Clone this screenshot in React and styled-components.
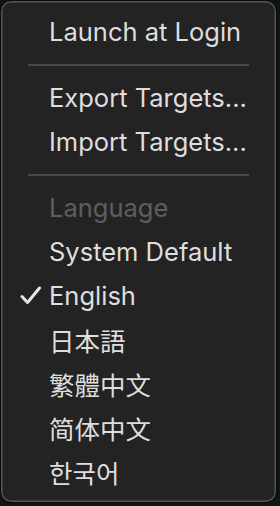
import React from "react";
import styled, { createGlobalStyle } from "styled-components";

const GlobalStyle = createGlobalStyle`
  html, body {
    margin: 0;
    padding: 0;
    background: #0e1513;
  }
  body {
    font-family: Inter, "Noto Sans CJK JP", "Noto Sans CJK KR", sans-serif;
  }
`;

const Menu = styled.div`
  box-sizing: border-box;
  width: 277px;
  height: 503px;
  padding: 9px 0;
  background: #232323;
  border: 1px solid #0a0a0a;
  border-radius: 11px;
  box-shadow: inset 0 0 0 1.5px #575757;
  display: flex;
  flex-direction: column;
`;

const Item = styled.div`
  position: relative;
  height: 44px;
  display: flex;
  align-items: center;
  padding-left: 48px;
  font-size: 25.5px;
  letter-spacing: 0;
  color: ${(p) => (p.$disabled ? "#5e5e5e" : "#dedede")};
  font-family: ${(p) =>
    p.$cjk
      ? `"Noto Sans CJK ${p.$cjk}", Inter, sans-serif`
      : `Inter, "Noto Sans CJK JP", sans-serif`};
`;

const Check = styled.svg`
  position: absolute;
  left: 19px;
  top: 13px;
`;

const Separator = styled.div`
  height: 22px;
  display: flex;
  align-items: center;
  padding: 0 27px;

  &::after {
    content: "";
    flex: 1;
    height: 2px;
    background: #494949;
  }
`;

const languages = [
  { label: "System Default" },
  { label: "English", checked: true },
  { label: "日本語", cjk: "JP" },
  { label: "繁體中文", cjk: "TC" },
  { label: "简体中文", cjk: "SC" },
  { label: "한국어", cjk: "KR" },
];

export default function App() {
  return (
    <>
      <GlobalStyle />
      <Menu>
        <Item>Launch at Login</Item>
        <Separator />
        <Item>Export Targets...</Item>
        <Item>Import Targets...</Item>
        <Separator />
        <Item $disabled>Language</Item>
        {languages.map((l) => (
          <Item key={l.label} $cjk={l.cjk}>
            {l.checked && (
              <Check width="22" height="19" viewBox="0 0 22 19">
                <path
                  d="M2 10.5 L7.5 16.5 L19.5 2"
                  fill="none"
                  stroke="#e6e6e6"
                  strokeWidth="3"
                  strokeLinecap="round"
                  strokeLinejoin="round"
                />
              </Check>
            )}
            {l.label}
          </Item>
        ))}
      </Menu>
    </>
  );
}
